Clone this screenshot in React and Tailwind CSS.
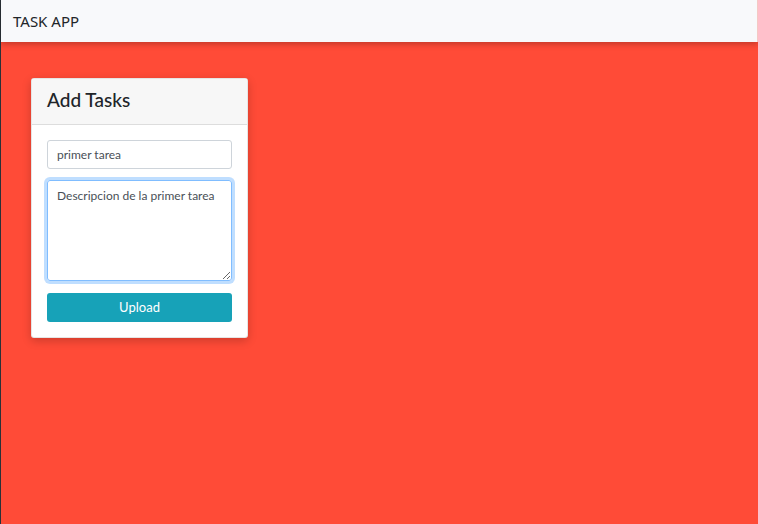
import React from "react";

const font = { fontFamily: 'Lato, "Noto Sans", sans-serif' };

const App = () => {
  return (
    <div
      className="min-h-[524px] w-[758px] bg-[#ff4b37] border-l border-[#2b3137] flex flex-col"
      style={{ fontFamily: '"Noto Sans", "Open Sans", sans-serif' }}
    >
      {/* Navbar */}
      <nav className="h-[42px] bg-[#f8f9fb] shadow-[0_2px_6px_rgba(0,0,0,0.25)] flex items-center px-3 border-r border-[#f4c9c4]">
        <span className="text-[15px] text-[#212529]">TASK APP</span>
      </nav>

      {/* Content */}
      <div className="pt-9 pl-[30px]" style={font}>
        <div className="w-[217px] bg-white rounded-[3px] border border-black/10 shadow-[0_3px_10px_rgba(0,0,0,0.2)]">
          <div className="h-[46px] bg-[#f7f7f7] border-b border-black/10 flex items-center px-[15px] pb-[3px]">
            <h2 className="text-[19px] text-[#212529] font-medium">Add Tasks</h2>
          </div>
          <div className="p-[15px] flex flex-col">
            <input
              defaultValue="primer tarea"
              className="h-[29px] w-full rounded-[3px] border border-[#ced4da] px-[9px] text-[12px] text-[#495057] outline-none"
              style={font}
            />
            <textarea
              defaultValue="Descripcion de la primer tarea"
              className="mt-[11px] h-[101px] w-full rounded-[3px] border border-[#80bdff] shadow-[0_0_0_3px_rgba(0,123,255,0.25)] px-[9px] py-[6px] text-[12px] text-[#495057] outline-none resize-y"
              style={font}
            />
            <button className="mt-[12px] h-[29px] w-full rounded-[3px] bg-[#17a2b8] text-white text-[13px]">
              Upload
            </button>
          </div>
        </div>
      </div>
    </div>
  );
};

export default App;
